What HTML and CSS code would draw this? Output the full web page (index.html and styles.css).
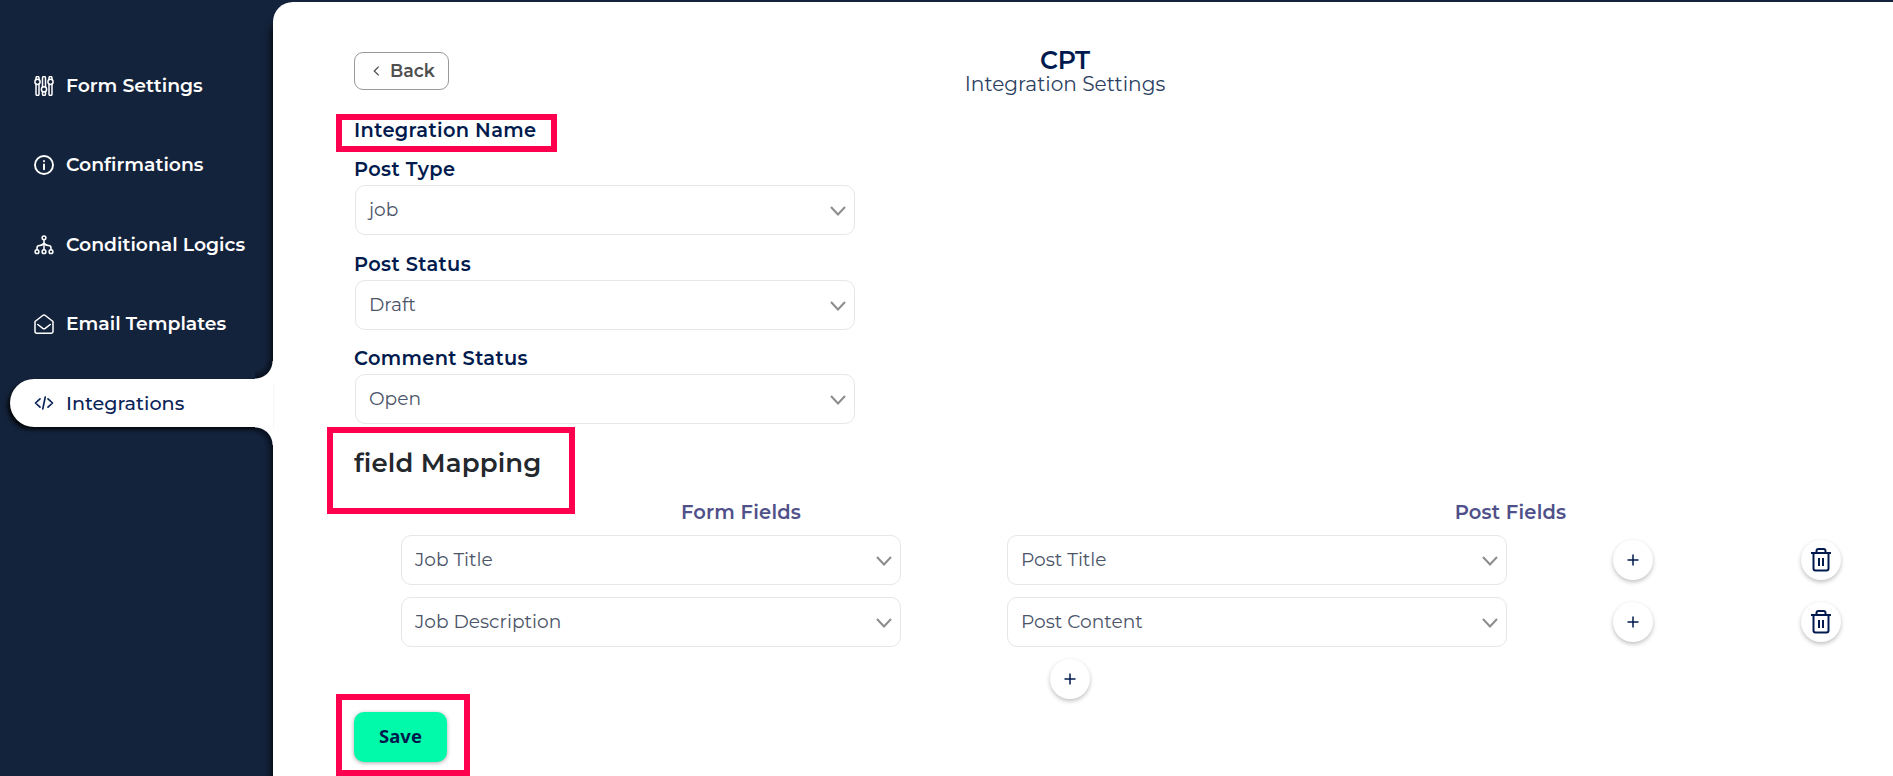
FILE: index.html
```html
<!DOCTYPE html>
<html lang="en">
<head>
<meta charset="utf-8">
<title>Integration Settings</title>
<link rel="stylesheet" href="styles.css">
</head>
<body>
<div class="app">
  <nav class="sidebar">
    <a class="nav-item"><svg class="nav-icon" viewBox="0 0 20 20"><path d="M2 8v10a1.500 1.500 0 0 0 3 0V8M2 3.500V2a1.500 1.500 0 0 1 3 0v1.500M8.500 11V2a1.500 1.500 0 0 1 3 0v9M8.500 15.500v2.500a1.500 1.500 0 0 0 3 0v-2.500M15 8v10a1.500 1.500 0 0 0 3 0V8M15 3.500V2a1.500 1.500 0 0 1 3 0v1.500"/><circle cx="3.500" cy="5.800" r="2.600"/><circle cx="10" cy="13.300" r="2.600"/><circle cx="16.500" cy="5.800" r="2.600"/></svg><span>Form Settings</span></a>
    <a class="nav-item"><svg class="nav-icon info" viewBox="0 0 20 20"><circle cx="10" cy="10" r="9"/><path d="M10 9.500v4.700M10 6v.2"/></svg><span>Confirmations</span></a>
    <a class="nav-item"><svg class="nav-icon" viewBox="0 0 20 20"><circle cx="10" cy="2.800" r="1.900"/><circle cx="3" cy="16.700" r="1.900"/><circle cx="10" cy="16.700" r="1.900"/><circle cx="17" cy="16.700" r="1.900"/><path d="M10 4.700v10.100M3 14.800v-1.800q0-2.500 2.500-2.500Q8.500 10.500 10 8q1.500 2.500 4.500 2.500 2.500 0 2.500 2.500v1.800"/></svg><span>Conditional Logics</span></a>
    <a class="nav-item"><svg class="nav-icon" viewBox="0 0 20 20"><path d="M1 7.500 8.700 1.500q1.300-1 2.600 0L19 7.500v10q0 1.700-1.700 1.700H2.700Q1 19.200 1 17.500zM3.800 10.500l5 3.800q1.200.800 2.400 0l5-3.800"/></svg><span>Email Templates</span></a>
    <a class="nav-item active"><svg class="nav-icon" viewBox="0 0 20 20"><path d="M6 5.800 1.500 10 6 14.200M14 5.800l4.500 4.200-4.500 4.200M11.200 4.200 8.800 15.800"/></svg><span>Integrations</span></a>
  </nav>
  <main class="panel">
    <header class="head">
      <button class="back"><svg viewBox="0 0 8 12"><path d="M6.500 1 1.500 6l5 5"/></svg><span>Back</span></button>
      <div class="title"><strong>CPT</strong><span>Integration Settings</span></div>
    </header>
    <div class="label name-label"><span>Integration Name</span><i class="mark mark-name"></i></div>
    <div class="label"><span>Post Type</span></div>
    <div class="select"><span>job</span><svg viewBox="0 0 16 10"><path d="M1 1l7 7.500L15 1"/></svg></div>
    <div class="label"><span>Post Status</span></div>
    <div class="select"><span>Draft</span><svg viewBox="0 0 16 10"><path d="M1 1l7 7.500L15 1"/></svg></div>
    <div class="label"><span>Comment Status</span></div>
    <div class="select"><span>Open</span><svg viewBox="0 0 16 10"><path d="M1 1l7 7.500L15 1"/></svg></div>
    <h2 class="mapping"><span>field Mapping</span><i class="mark mark-map"></i></h2>
    <div class="columns"><span>Form Fields</span><span>Post Fields</span></div>
    <div class="row">
      <div class="select"><span>Job Title</span><svg viewBox="0 0 16 10"><path d="M1 1l7 7.500L15 1"/></svg></div>
      <div class="select"><span>Post Title</span><svg viewBox="0 0 16 10"><path d="M1 1l7 7.500L15 1"/></svg></div>
      <button class="round"><svg class="plus" viewBox="0 0 12 12"><path d="M6 .5v11M.5 6h11"/></svg></button>
      <button class="round"><svg class="trash" viewBox="0 0 20 24"><path d="M0 5h20M2.500 5v15.500q0 2 2 2h11q2 0 2-2V5M5.500 5V3q0-2 2-2h5q2 0 2 2v2M8 10v8M12 10v8"/></svg></button>
    </div>
    <div class="row">
      <div class="select"><span>Job Description</span><svg viewBox="0 0 16 10"><path d="M1 1l7 7.500L15 1"/></svg></div>
      <div class="select"><span>Post Content</span><svg viewBox="0 0 16 10"><path d="M1 1l7 7.500L15 1"/></svg></div>
      <button class="round"><svg class="plus" viewBox="0 0 12 12"><path d="M6 .5v11M.5 6h11"/></svg></button>
      <button class="round"><svg class="trash" viewBox="0 0 20 24"><path d="M0 5h20M2.500 5v15.500q0 2 2 2h11q2 0 2-2V5M5.500 5V3q0-2 2-2h5q2 0 2 2v2M8 10v8M12 10v8"/></svg></button>
    </div>
    <div class="add"><button class="round"><svg class="plus" viewBox="0 0 12 12"><path d="M6 .5v11M.5 6h11"/></svg></button></div>
    <div class="save-wrap"><button class="save">Save</button><i class="mark mark-save"></i></div>
  </main>
</div>
</body>
</html>
```
FILE: styles.css
```css
* { box-sizing: border-box; }
body { margin: 0; font-family: Montserrat, Inter, sans-serif; background: #14233c; }
button { font-family: inherit; margin: 0; padding: 0; }
svg { fill: none; stroke: currentColor; flex: none; }
.app { display: flex; width: 1893px; height: 776px; padding-top: 2px; overflow: hidden; background: #14233c; }

.sidebar { width: 273px; flex: none; display: flex; flex-direction: column; gap: 31.300px; padding: 60px 0 0 10px; position: relative; z-index: 1; }
.nav-item { position: relative; height: 48px; display: flex; align-items: center; gap: 12px; padding-left: 24px; color: #fff; font-size: 18.800px; font-weight: 600; line-height: 24px; white-space: nowrap; }
.nav-icon { width: 20px; height: 20px; stroke-width: 1.500; stroke-linecap: round; stroke-linejoin: round; }
.nav-icon.info { stroke-width: 1.900; }
.nav-item.active { background: #fff; color: #0a2357; font-size: 19.200px; font-weight: 500; border-radius: 24px 0 0 24px; box-shadow: -3px 3px 5px -1px #000; }
.nav-item.active .nav-icon { stroke-width: 1.700; }
/* concave joins between the active tab and the panel */
.nav-item.active::before, .nav-item.active::after { content: ""; position: absolute; right: 0; width: 18px; height: 18px; }
.nav-item.active::before { top: -18px; background: radial-gradient(circle at 0 0, #14233c 9px, #07101f 17px, #fff 18px); }
.nav-item.active::after { bottom: -18px; background: radial-gradient(circle at 0 100%, #14233c 9px, #07101f 17px, #fff 18px); }

.panel { flex: 1; background: #fff; border-radius: 20px 0 0 0; padding: 50px 53px 0 81px; box-shadow: -1px 14px 8px #000; }
.head { display: flex; height: 60px; }
.back { width: 95px; height: 38px; display: flex; align-items: center; gap: 10px; padding-left: 18px; border: 1px solid #999; border-radius: 9px; background: #fff; color: #4f4f4f; font-size: 17.400px; font-weight: 600; line-height: 24px; }
.back svg { width: 7px; height: 12px; stroke-width: 1.500; }
.title { margin: -4px 0 0 516px; width: 200px; display: flex; flex-direction: column; align-items: center; color: #001a4d; white-space: nowrap; }
.title strong { font-size: 25px; font-weight: 600; line-height: 25px; }
.title span { font-size: 20.100px; font-weight: 400; line-height: 22px; color: #2c3f62; }

.label { height: 44.500px; display: flex; align-items: flex-end; padding-bottom: 4px; color: #001a4d; font-size: 19.400px; font-weight: 600; letter-spacing: .35px; line-height: 24px; }
.name-label { position: relative; height: 29px; padding-bottom: 4.500px; margin-top: 5px; }
.name-label + .label { height: 39px; }
.select { width: 500px; height: 50px; margin-left: 1px; padding: 0 8px 0 13px; display: flex; align-items: center; justify-content: space-between; border: 1px solid #e6e6e6; border-radius: 10px; color: #4b5468; font-size: 18.600px; font-weight: 400; line-height: 24px; }
.select svg { width: 16px; height: 10px; margin-top: 2px; stroke: #8c8c8c; stroke-width: 2; }
.mapping { position: relative; margin: 0; padding-top: 22px; height: 76px; color: #23282d; font-size: 26px; font-weight: 600; letter-spacing: .15px; line-height: 34px; }
.columns { display: grid; grid-template-columns: 774px 765px; height: 34.500px; color: #50508a; font-size: 19.500px; font-weight: 600; letter-spacing: .2px; line-height: 24px; text-align: center; }
.row { display: grid; grid-template-columns: 606px 606px 188px 40px; align-items: center; height: 50px; margin: 0 0 12px 46px; }
.round { width: 40px; height: 40px; border: 0; border-radius: 50%; background: #fff; color: #001a4d; display: flex; align-items: center; justify-content: center; box-shadow: 0 2px 4px rgba(0,0,0,.25); }
.row .round { margin: 1px 0 0 1px; }
.plus { width: 12px; height: 12px; stroke-width: 1.500; }
.trash { width: 20px; height: 24px; stroke-width: 2; }
.add { display: flex; margin-left: 696px; }
.save-wrap { position: relative; width: 93px; margin-top: 13px; }
.save { width: 93px; height: 50px; border: 0; border-radius: 10px; background: #00faa9; color: #001a4d; font: 700 18.500px/24px "Noto Sans", sans-serif; padding-bottom: 2px; box-shadow: 0 1px 4px rgba(0,0,0,.35); }

/* highlight frames over the form */
.mark { position: absolute; border: 6px solid #ff004f; }
.mark-name { left: -18px; top: -3px; width: 221px; height: 38px; }
.mark-map { left: -27px; top: 2.500px; width: 248px; height: 87px; }
.mark-save { left: -18px; top: -18px; width: 134px; height: 82px; }
```
